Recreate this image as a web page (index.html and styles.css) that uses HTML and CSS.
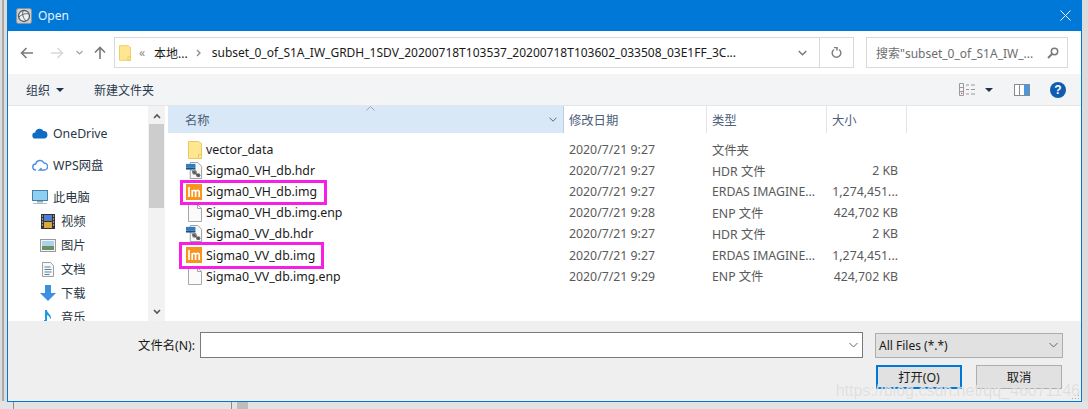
FILE: index.html
```html
<!DOCTYPE html>
<html lang="zh">
<head>
<meta charset="utf-8">
<title>Open</title>
<link rel="stylesheet" href="styles.css">
</head>
<body>
<svg class="defs" width="0" height="0">
  <symbol id="folder" viewBox="0 0 14 18"><path d="M.5.5h10l3 2v15H.5z" fill="#ffe690" stroke="#eac85f"/><path d="M10.5 13.500h3v4h-3z" fill="#ffe690" stroke="#eac85f"/></symbol>
  <symbol id="doc" viewBox="0 0 14 18"><path d="M.5.5h9l4 4v13H.5z" fill="#fbfbfb" stroke="#a8a8a8"/><path d="M9.500.5v4h4" fill="none" stroke="#a8a8a8"/></symbol>
  <symbol id="hdr" viewBox="0 0 18 18"><path d="M4.500.5h8l4 4v13h-12z" fill="#f8f8f8" stroke="#9a9a9a"/><rect x="0" y="2" width="10" height="4" fill="#2f7dc4"/><rect x="0" y="6" width="10" height="2" fill="#1c4f86"/><circle cx="9" cy="11" r="2.500" fill="#777"/><circle cx="13" cy="14" r="2.200" fill="#666"/><path d="M6 9l8 6" stroke="#444"/></symbol>
  <symbol id="imgfile" viewBox="0 0 16 16"><rect width="16" height="16" fill="#f7931e"/><path d="M3 3v10M6.200 13V6M6.200 7.500c.9-1.500 3.100-1.500 3.400 0V13M9.600 7.500c.9-1.500 3.400-1.500 3.600 0V13" fill="none" stroke="#fff" stroke-width="1.700"/></symbol>
</svg>

<div class="backdrop-bottom">
  <span class="rule rule-a"></span><span class="rule rule-b"></span><span class="rule rule-c"></span>
</div>

<main class="dialog">
  <header class="titlebar">
    <svg class="app-icon" width="16" height="16" viewBox="0 0 16 16"><rect x=".5" y=".5" width="15" height="15" rx="2" fill="#c9ced3" stroke="#8d9399"/><circle cx="8" cy="8" r="5.500" fill="#eef0f2" stroke="#59616a" stroke-width="1.300"/><path d="M3 9c3-3 7-4 10-3M7 3c-1 3 0 7 3 10" fill="none" stroke="#59616a"/></svg>
    <span class="title">Open</span>
    <svg class="close" width="11" height="11" viewBox="0 0 11 11"><path d="M.5.5l10 10M10.500.5l-10 10" stroke="#fff" stroke-width="1"/></svg>
  </header>

  <nav class="navbar">
    <svg class="nav-btn" width="14" height="12" viewBox="0 0 14 12"><path d="M13 6H1.500M6.500 1l-5 5 5 5" fill="none" stroke="#7a7a7a" stroke-width="1.600"/></svg>
    <svg class="nav-btn fwd" width="14" height="12" viewBox="0 0 14 12"><path d="M1 6h11.500M7.500 1l5 5-5 5" fill="none" stroke="#d9d9d9" stroke-width="1.600"/></svg>
    <svg class="nav-btn drop" width="7" height="5" viewBox="0 0 7 5"><path d="M.5 1l3 3 3-3" fill="none" stroke="#a0a0a0" stroke-width="1.200"/></svg>
    <svg class="nav-btn up" width="12" height="13" viewBox="0 0 12 13"><path d="M6 13V1.500M1 6.500l5-5 5 5" fill="none" stroke="#7a7a7a" stroke-width="1.600"/></svg>
    <div class="address">
      <svg class="addr-folder" width="12" height="16"><use href="#folder"/></svg>
      <span class="chev-left">«</span>
      <span class="crumb first">本地...</span>
      <svg class="crumb-sep" width="5" height="8" viewBox="0 0 5 8"><path d="M1 1l3 3-3 3" fill="none" stroke="#8a8a8a" stroke-width="1.300"/></svg>
      <span class="crumb path">subset_0_of_S1A_IW_GRDH_1SDV_20200718T103537_20200718T103602_033508_03E1FF_3C...</span>
      <svg class="addr-drop" width="9" height="6" viewBox="0 0 9 6"><path d="M.7 1l3.800 3.800L8.300 1" fill="none" stroke="#777" stroke-width="1.400"/></svg>
      <div class="refresh"><svg width="11" height="12" viewBox="0 0 11 12"><path d="M3 2.500a4.300 4.300 0 1 0 5 0M3 .5h3v3" fill="none" stroke="#7f7f7f" stroke-width="1.500"/></svg></div>
    </div>
    <div class="search">
      <span class="search-text">搜索"subset_0_of_S1A_IW_...</span>
      <svg width="12" height="12" viewBox="0 0 12 12"><circle cx="7.500" cy="4.500" r="3.200" fill="none" stroke="#7a7a7a" stroke-width="1.500"/><path d="M5 7l-4 4" stroke="#7a7a7a" stroke-width="2"/></svg>
    </div>
  </nav>

  <div class="toolbar">
    <span class="tool">组织</span><span class="caret"></span>
    <span class="tool new-folder">新建文件夹</span>
    <div class="toolbar-right">
      <svg width="17" height="13" viewBox="0 0 17 13"><path d="M.5.500h4v12h-4zM7 2h3M12 2h4M7 6.500h3M12 6.500h4M7 11h3M12 11h4M.5 4.500h4M.5 8.500h4" fill="none" stroke="#9a9a9a"/><rect x="2" y="9.800" width="1.200" height="1.200" fill="#e04040"/></svg>
      <span class="caret view-caret"></span>
      <svg class="pane" width="16" height="12" viewBox="0 0 16 12"><rect x=".5" y=".5" width="15" height="11" fill="#fff" stroke="#8a8a8a"/><rect x="10" y="1" width="5" height="10" fill="#4a97de"/><path d="M5.500 1v10" stroke="#8a8a8a"/></svg>
      <span class="help">?</span>
    </div>
  </div>

  <div class="content">
    <aside class="sidebar">
      <div class="tree">
        <div class="tree-item top"><svg width="16" height="11" viewBox="0 0 16 11"><path d="M3.500 10.500a3 3 0 0 1-.3-6A4.500 4.500 0 0 1 11.500 3 3.800 3.800 0 0 1 12.500 10.500z" fill="#0f6cc4"/></svg><span>OneDrive</span></div>
        <div class="tree-item top"><svg width="16" height="12" viewBox="0 0 16 12"><path d="M4 11a3 3 0 0 1-.4-6A4.500 4.500 0 0 1 12 4a3.500 3.500 0 0 1 .3 7H7.500l2-2" fill="none" stroke="#4a8fe7" stroke-width="1.400"/></svg><span>WPS网盘</span></div>
        <div class="tree-item top"><svg width="16" height="14" viewBox="0 0 16 14"><rect x=".5" y=".5" width="15" height="10" fill="#8ed0f2" stroke="#4a7fa8"/><path d="M5 11h6v1.500H5z" fill="#9aa5ad"/><path d="M1 13.500h14" stroke="#b5bcc2"/></svg><span>此电脑</span></div>
        <div class="tree-item sub"><svg width="14" height="15" viewBox="0 0 14 15"><rect width="14" height="15" fill="#333"/><rect x="3" y="1" width="8" height="6" fill="#4f7fd0"/><rect x="3" y="8" width="8" height="6" fill="#d9a93a"/><path d="M1 2h1M1 5h1M1 8h1M1 11h1M12 2h1M12 5h1M12 8h1M12 11h1" stroke="#fff"/></svg><span>视频</span></div>
        <div class="tree-item sub"><svg width="16" height="13" viewBox="0 0 16 13"><rect x=".5" y=".5" width="15" height="12" fill="#f5f5f5" stroke="#9a9a9a"/><rect x="2" y="2" width="12" height="5" fill="#a9d3ea"/><rect x="2" y="7" width="12" height="4" fill="#6c8f6a"/></svg><span>图片</span></div>
        <div class="tree-item sub"><svg width="12" height="15" viewBox="0 0 12 15"><path d="M.5.500h8l3 3v11H.5z" fill="#f8f8f8" stroke="#9aa0a6"/><path d="M2.500 5h6M2.500 7.500h7M2.500 10h7M2.500 12.500h5" stroke="#5b7f9f"/></svg><span>文档</span></div>
        <div class="tree-item sub"><svg width="16" height="16" viewBox="0 0 16 16"><path d="M5 0h6v8h5l-8 8-8-8h5z" fill="#3d8fe0"/></svg><span>下载</span></div>
        <div class="tree-item sub"><svg width="8" height="15" viewBox="0 0 8 15"><path d="M1 0h2c0 3 4 4 4 8l-1 1c0-2-1-3-3-4v7a2.500 2.500 0 1 1-2-2z" fill="#1e9be8"/></svg><span>音乐</span></div>
      </div>
      <div class="scrollbar">
        <svg width="8" height="6" viewBox="0 0 8 6"><path d="M1 5l3-3 3 3" fill="none" stroke="#555" stroke-width="1.600"/></svg>
        <div class="thumb"></div>
        <svg class="scroll-down" width="8" height="6" viewBox="0 0 8 6"><path d="M1 1l3 3 3-3" fill="none" stroke="#555" stroke-width="1.600"/></svg>
      </div>
    </aside>

    <section class="files">
      <div class="columns">
        <div class="col col-name">名称<svg class="sort" width="9" height="5" viewBox="0 0 9 5"><path d="M.5 4.500l4-4 4 4" fill="none" stroke="#a5a5a5"/></svg><svg class="col-drop" width="8" height="5" viewBox="0 0 8 5"><path d="M.5.700L4 4.200 7.500.7" fill="none" stroke="#666"/></svg></div>
        <div class="col col-date">修改日期</div>
        <div class="col col-type">类型</div>
        <div class="col col-size">大小</div>
      </div>
      <div class="rows">
        <div class="row"><span class="r-name"><svg class="ico" width="14" height="18"><use href="#folder"/></svg>vector_data</span><span class="r-date">2020/7/21 9:27</span><span class="r-type">文件夹</span><span class="r-size"></span></div>
        <div class="row"><span class="r-name"><svg class="ico-hdr" width="17" height="17"><use href="#hdr"/></svg>Sigma0_VH_db.hdr</span><span class="r-date">2020/7/21 9:27</span><span class="r-type">HDR 文件</span><span class="r-size">2 KB</span></div>
        <div class="row"><span class="r-name"><svg class="ico-img" width="16" height="16"><use href="#imgfile"/></svg>Sigma0_VH_db.img</span><span class="r-date">2020/7/21 9:27</span><span class="r-type">ERDAS IMAGINE...</span><span class="r-size">1,274,451...</span></div>
        <div class="row"><span class="r-name"><svg class="ico" width="14" height="18"><use href="#doc"/></svg>Sigma0_VH_db.img.enp</span><span class="r-date">2020/7/21 9:28</span><span class="r-type">ENP 文件</span><span class="r-size">424,702 KB</span></div>
        <div class="row"><span class="r-name"><svg class="ico-hdr" width="17" height="17"><use href="#hdr"/></svg>Sigma0_VV_db.hdr</span><span class="r-date">2020/7/21 9:27</span><span class="r-type">HDR 文件</span><span class="r-size">2 KB</span></div>
        <div class="row"><span class="r-name"><svg class="ico-img" width="16" height="16"><use href="#imgfile"/></svg>Sigma0_VV_db.img</span><span class="r-date">2020/7/21 9:27</span><span class="r-type">ERDAS IMAGINE...</span><span class="r-size">1,274,451...</span></div>
        <div class="row"><span class="r-name"><svg class="ico" width="14" height="18"><use href="#doc"/></svg>Sigma0_VV_db.img.enp</span><span class="r-date">2020/7/21 9:29</span><span class="r-type">ENP 文件</span><span class="r-size">424,702 KB</span></div>
      </div>
      <span class="mark mark-a"></span>
      <span class="mark mark-b"></span>
    </section>
  </div>

  <footer class="footer">
    <div class="form-row">
      <label class="fname-label">文件名(N):</label>
      <div class="fname-input"><svg width="9" height="6" viewBox="0 0 9 6"><path d="M.5 1l4 4 4-4" fill="none" stroke="#666"/></svg></div>
      <div class="filter"><span>All Files (*.*)</span><svg width="9" height="6" viewBox="0 0 9 6"><path d="M.5 1l4 4 4-4" fill="none" stroke="#666"/></svg></div>
    </div>
    <div class="btn-row">
      <button class="btn primary">打开(O)</button>
      <button class="btn">取消</button>
    </div>
    <svg class="grip" width="9" height="9" viewBox="0 0 9 9"><path d="M7 1h1v1H7zM4 4h1v1H4zM7 4h1v1H7zM1 7h1v1H1zM4 7h1v1H4zM7 7h1v1H7z" fill="#a8a8a8"/></svg>
  </footer>
</main>
<span class="watermark">https://blog.csdn.net/qq_46071146</span>
</body>
</html>
```
FILE: styles.css
```css
* { box-sizing: border-box; }
html, body { margin: 0; padding: 0; height: 409px; overflow: hidden; }
body {
  position: relative;
  background: #dcdcdc;
  font-family: "Noto Sans", "Noto Sans CJK SC", sans-serif;
  font-size: 12.300px;
  color: #1a1a1a;
  padding-left: 7px;
}
body::before {
  content: "";
  position: absolute;
  left: 2px; top: 0; bottom: 0;
  width: 2px;
  background: #a9a9a9;
}
.defs { position: absolute; }
.backdrop-bottom { position: absolute; left: 0; right: 0; top: 401px; height: 8px; background: #e3e3e3; }
.rule { position: absolute; top: 0; bottom: 0; width: 1px; background: #8c8c8c; }
.rule-a { left: 13px; }
.rule-b { left: 231px; }
.rule-c { left: 237px; width: 11px; background: #bdbdbd; }

.dialog {
  position: relative;
  width: 1075px;
  height: 402px;
  border: 1px solid #0078d7;
  border-top: 0;
  background: #fff;
  display: flex;
  flex-direction: column;
}
.titlebar {
  height: 31px;
  flex: none;
  background: #0078d7;
  color: #fff;
  display: flex;
  align-items: center;
  padding-left: 8px;
  padding-right: 10px;
}
.app-icon { margin-right: 6px; }
.title { font-size: 12px; flex: 1; color: #e8f2fb; }

.navbar {
  height: 43px;
  flex: none;
  display: flex;
  align-items: center;
  padding-left: 12px;
  padding-right: 12px;
}
.nav-btn { flex: none; }
.fwd { margin-left: 16px; }
.drop { margin-left: 12px; }
.up { margin-left: 11px; }
.address {
  margin-left: 8px;
  width: 740px;
  height: 31px;
  border: 1px solid #d9d9d9;
  display: flex;
  align-items: center;
  padding-left: 4px;
}
.addr-folder { flex: none; }
.chev-left { margin-left: 8px; color: #8a8a8a; font-size: 12px; }
.crumb { font-size: 12px; white-space: nowrap; color: #1a1a1a; }
.first { margin-left: 9px; }
.crumb-sep { margin-left: 8px; flex: none; }
.path { margin-left: 11px; flex: 1; }
.addr-drop { margin-right: 12px; flex: none; }
.refresh {
  width: 34px;
  height: 29px;
  border-left: 1px solid #d9d9d9;
  display: flex;
  align-items: center;
  justify-content: center;
}
.search {
  margin-left: 12px;
  width: 202px;
  height: 31px;
  border: 1px solid #d9d9d9;
  display: flex;
  align-items: center;
  justify-content: space-between;
  padding: 0 8px 0 9px;
}
.search-text { color: #6d6d6d; font-size: 12px; white-space: nowrap; }

.toolbar {
  height: 32px;
  flex: none;
  background: #f3f4f6;
  border-bottom: 1px solid #e6e6e6;
  display: flex;
  align-items: center;
  padding-left: 18px;
  padding-right: 15px;
  color: #2b3a4d;
}
.tool { font-size: 12px; }
.caret {
  width: 0; height: 0;
  margin-left: 6px;
  border-left: 4px solid transparent;
  border-right: 4px solid transparent;
  border-top: 4px solid #23324a;
}
.new-folder { margin-left: 30px; }
.toolbar-right { margin-left: auto; display: flex; align-items: center; }
.view-caret { margin-left: 9px; }
.pane { margin-left: 21px; }
.help {
  margin-left: 20px;
  width: 16px; height: 16px;
  border-radius: 50%;
  background: #0f5cb0;
  color: #fff;
  font: bold 12px/16px "Liberation Sans", sans-serif;
  text-align: center;
}

.content { flex: none; height: 215px; display: flex; overflow: hidden; }
.sidebar { width: 157px; flex: none; display: flex; }
.tree { width: 140px; flex: none; overflow: hidden; padding-top: 16px; }
.tree-item { display: flex; align-items: center; height: 24px; color: #2a3644; }
.tree-item svg { flex: none; }
.top { padding-left: 24px; }
.top span { margin-left: 5px; }
.top:nth-child(1) { height: 22px; margin-bottom: 10px; }
.top:nth-child(2) { height: 22px; margin-bottom: 10px; }
.top:nth-child(3) { height: 22px; margin-bottom: 1px; }
.sub {
  display: grid;
  grid-template-columns: 16px auto;
  column-gap: 5px;
  justify-content: start;
  padding-left: 32px;
}
.sub svg { justify-self: center; }
.scrollbar {
  width: 17px;
  flex: none;
  background: #f2f2f2;
  display: flex;
  flex-direction: column;
  align-items: center;
  padding-top: 7px;
  position: relative;
}
.thumb { width: 15px; height: 84px; margin-top: 5px; background: #cdcdcd; flex: none; }
.scroll-down { margin-top: auto; margin-bottom: 6px; }

.files { position: relative; flex: 1; padding-left: 3px; }
.columns { display: flex; height: 27px; }
.col {
  position: relative;
  border-right: 1px solid #e5e5e5;
  padding-left: 5px;
  display: flex;
  align-items: center;
  color: #4c607a;
}
.col-name { width: 396px; background: #d9e8f6; padding-left: 17px; border-right: 1px solid #b8cfe6; }
.col-date { width: 143px; }
.col-type { width: 120px; }
.col-size { width: 80px; }
.sort { position: absolute; left: 198px; top: 0; }
.col-drop { position: absolute; right: 6px; top: 11px; }
.rows { padding-top: 6px; }
.row { display: flex; height: 21.100px; align-items: center; color: #1a1a1a; }
.row span { white-space: nowrap; }
.r-name { width: 396px; display: flex; align-items: center; padding-left: 20px; }
.ico { flex: none; margin-right: 4px; }
.ico-hdr { flex: none; margin-left: -2px; margin-right: 3px; }
.ico-img { flex: none; margin-left: -2px; margin-right: 4px; }
.r-date { width: 143px; padding-left: 5px; color: #5a5a5a; }
.r-type { width: 120px; padding-left: 5px; color: #5a5a5a; }
.r-size { width: 71px; text-align: right; color: #5a5a5a; }
.mark { position: absolute; border: 3px solid #f71fe5; pointer-events: none; }
.mark-a { left: 15px; top: 74px; width: 147px; height: 25px; }
.mark-b { left: 14px; top: 136px; width: 145px; height: 27px; }

.footer {
  position: relative;
  flex: 1;
  background: #efefef;
  padding-top: 11px;
  padding-right: 18px;
}
.grip { position: absolute; right: 1px; bottom: 1px; }
.form-row { display: flex; align-items: center; justify-content: flex-end; height: 26px; }
.fname-label { margin-right: 5px; color: #1a1a1a; }
.fname-input {
  width: 663px; height: 26px;
  background: #fff;
  border: 1px solid #7a7a7a;
  display: flex; align-items: center; justify-content: flex-end;
  padding-right: 4px;
}
.filter {
  margin-left: 12px;
  width: 188px; height: 25px;
  background: #e1e1e1;
  border: 1px solid #adadad;
  display: flex; align-items: center; justify-content: space-between;
  padding: 0 4px 0 3px;
  font-size: 12px;
}
.btn-row { display: flex; justify-content: flex-end; gap: 14px; margin-top: 7px; padding-right: 1px; }
.btn {
  width: 86px; height: 24px;
  background: #e1e1e1;
  border: 1px solid #adadad;
  font: inherit;
  color: #1a1a1a;
  padding: 0;
}
.primary { border: 2px solid #0078d7; }
.watermark {
  position: absolute;
  right: 8px;
  bottom: 9px;
  font: 16px "Liberation Sans", sans-serif;
  color: rgba(215, 215, 215, .8);
  white-space: nowrap;
  text-shadow: 0 0 1px rgba(255, 255, 255, .8);
}
```
